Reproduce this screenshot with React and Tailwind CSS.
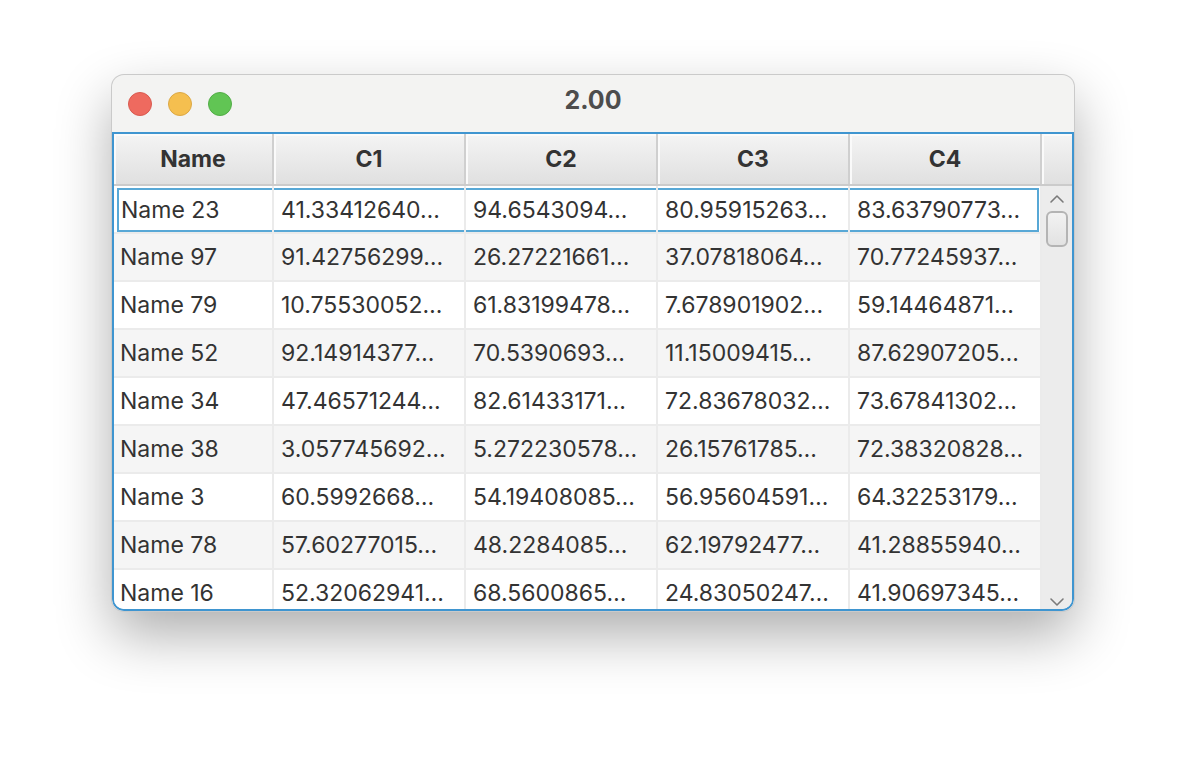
import React from 'react';

const ROWS = [
  ['Name 23', '41.33412640…', '94.6543094…', '80.95915263…', '83.63790773…'],
  ['Name 97', '91.42756299…', '26.27221661…', '37.07818064…', '70.77245937…'],
  ['Name 79', '10.75530052…', '61.83199478…', '7.678901902…', '59.14464871…'],
  ['Name 52', '92.14914377…', '70.5390693…', '11.15009415…', '87.62907205…'],
  ['Name 34', '47.46571244…', '82.61433171…', '72.83678032…', '73.67841302…'],
  ['Name 38', '3.057745692…', '5.272230578…', '26.15761785…', '72.38320828…'],
  ['Name 3', '60.5992668…', '54.19408085…', '56.95604591…', '64.32253179…'],
  ['Name 78', '57.60277015…', '48.2284085…', '62.19792477…', '41.28855940…'],
  ['Name 16', '52.32062941…', '68.5600865…', '24.83050247…', '41.90697345…'],
];

const HEADERS = ['Name', 'C1', 'C2', 'C3', 'C4'];
const WIDTHS = ['w-[160px]', 'w-[192px]', 'w-[192px]', 'w-[192px]', 'w-[192px]'];

function TrafficLights() {
  return (
    <div className="flex items-center gap-4">
      <span className="h-6 w-6 rounded-full border border-[#d95a50] bg-[#ee6a5f]" />
      <span className="h-6 w-6 rounded-full border border-[#dca845] bg-[#f5bf4f]" />
      <span className="h-6 w-6 rounded-full border border-[#52ad47] bg-[#61c554]" />
    </div>
  );
}

function Chevron({ up }) {
  return (
    <svg width="16" height="10" viewBox="0 0 16 10" fill="none">
      <path
        d={up ? 'M2 8 L8 2 L14 8' : 'M2 2 L8 8 L14 2'}
        stroke="#7a7a7a"
        strokeWidth="1.6"
        strokeLinecap="round"
        strokeLinejoin="round"
      />
    </svg>
  );
}

// selected first row: blue focus outline drawn per cell
function selClass(c) {
  let cls = 'mt-[2px] h-[44px] border-y-2 border-[#58a8d6]';
  if (c === 0) cls += ' ml-[3px] border-l-2 pl-[2px]';
  else cls += ' pl-[7px]';
  if (c === 4) cls += ' mr-[1px] border-r-2';
  return cls;
}

export default function App() {
  return (
    <div className="min-h-[760px] bg-white pl-[112px] pt-[75px] font-['Inter',sans-serif]">
      <div className="flex h-[536px] w-[962px] flex-col overflow-hidden rounded-[12px] bg-[#f3f3f2] shadow-[0_0_0_1px_#cacaca,0_24px_56px_rgba(0,0,0,0.32)]">
        {/* title bar */}
        <div className="relative flex h-[57px] shrink-0 items-center pl-[16px]">
          <TrafficLights />
          <div className="absolute inset-0 flex items-center justify-center pb-[5px] text-[25px] font-bold text-[#4d4d4d]">
            2.00
          </div>
        </div>

        {/* table */}
        <div className="flex min-h-0 flex-1 flex-col overflow-hidden rounded-b-[12px] border-2 border-[#3f95d0] bg-white">
          <div className="flex h-[52px] shrink-0 border-b-2 border-[#cbcbcb]">
            {HEADERS.map((h, i) => (
              <div
                key={h}
                className={`${WIDTHS[i]} flex items-center justify-center border-r-2 border-[#cfcfcf] bg-gradient-to-b from-[#f4f4f4] to-[#e0e0e0] text-[23px] font-bold text-[#333] shadow-[inset_2px_2px_0_#fafafa]`}
              >
                {h}
              </div>
            ))}
            <div className="flex-1 bg-gradient-to-b from-[#f4f4f4] to-[#e0e0e0] shadow-[inset_2px_2px_0_#fafafa]" />
          </div>

          <div className="flex min-h-0 flex-1">
            <div className="flex w-[928px] flex-col overflow-hidden">
              {ROWS.map((row, r) => (
                <div
                  key={r}
                  className={`flex h-[48px] shrink-0 border-b-2 border-[#ebebeb] ${r % 2 ? 'bg-[#f5f5f5]' : 'bg-white'}`}
                >
                  {row.map((cell, c) => (
                    <div
                      key={c}
                      className={`${WIDTHS[c]} flex items-start whitespace-nowrap border-r-2 border-[#ebebeb] text-[23px] text-[#333]`}
                    >
                      <div
                        className={`flex flex-1 items-center ${
                          r === 0 ? selClass(c) : `h-full ${c === 0 ? 'pl-[6px]' : 'pl-[7px]'}`
                        }`}
                      >
                        {cell}
                      </div>
                    </div>
                  ))}
                </div>
              ))}
            </div>

            {/* scrollbar */}
            <div className="flex flex-1 flex-col items-center justify-between bg-[#ececec] pb-[2px] pt-[8px]">
              <div className="flex flex-col items-center gap-[7px]">
                <Chevron up />
                <div className="h-[36px] w-[22px] rounded-[6px] border-2 border-[#b4b4b4] bg-gradient-to-b from-[#f2f2f2] to-[#e2e2e2]" />
              </div>
              <Chevron />
            </div>
          </div>
        </div>
      </div>
    </div>
  );
}
